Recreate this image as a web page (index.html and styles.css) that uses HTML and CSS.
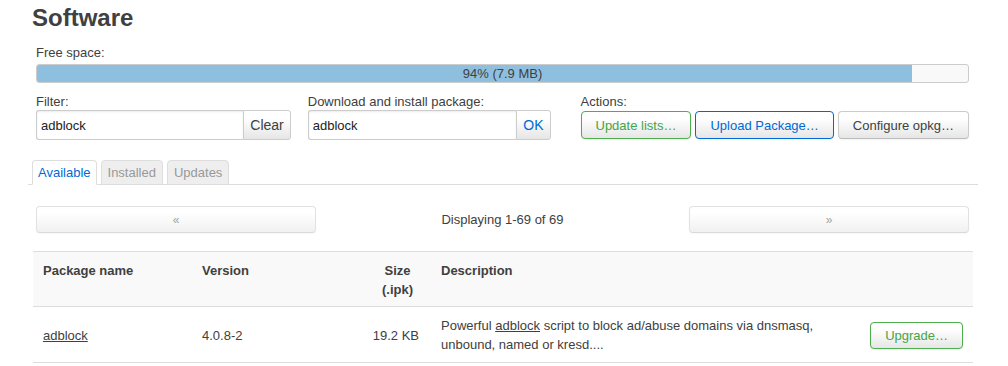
FILE: index.html
```html
<!DOCTYPE html>
<html lang="en">
  <head>
    <meta charset="UTF-8" />
    <title>Software</title>
    <link rel="stylesheet" href="styles.css">
  </head>
  <body>
    <div class="main">
      <h2>Software</h2>

      <div class="controls">
        <label class="field-label">Free space:</label>
        <div class="progress">
          <div class="progress-fill" style="width: 94%"></div>
          <span class="progress-text">94% (7.9 MB)</span>
        </div>

        <div class="control-row">
          <!-- Filter -->
          <div class="control-group filter-group">
            <label class="field-label">Filter:</label>
            <div class="input-group">
              <input type="text" value="adblock" />
              <button class="btn-addon">Clear</button>
            </div>
          </div>

          <!-- Download -->
          <div class="control-group download-group">
            <label class="field-label">Download and install package:</label>
            <div class="input-group">
              <input type="text" value="adblock" />
              <button class="btn-addon btn-addon-action">OK</button>
            </div>
          </div>

          <!-- Actions -->
          <div class="control-group actions-group">
            <label class="field-label">Actions:</label>
            <div class="actions">
              <button class="btn btn-positive">Update lists…</button>
              <button class="btn btn-action">Upload Package…</button>
              <button class="btn">Configure opkg…</button>
            </div>
          </div>
        </div>
      </div>

      <ul class="tabs">
        <li class="tab active">Available</li>
        <li class="tab">Installed</li>
        <li class="tab">Updates</li>
      </ul>

      <div class="pager">
        <button class="btn btn-pager">«</button>
        <div class="pager-info">Displaying 1-69 of 69</div>
        <button class="btn btn-pager">»</button>
      </div>

      <table class="pkg-table">
        <thead>
          <tr>
            <th class="col-name">Package name</th>
            <th class="col-version">Version</th>
            <th class="col-size">Size (.ipk)</th>
            <th class="col-desc">Description</th>
            <th class="col-action"></th>
          </tr>
        </thead>
        <tbody>
          <tr>
            <td><a href="#">adblock</a></td>
            <td>4.0.8-2</td>
            <td class="size">19.2 KB</td>
            <td>Powerful <a href="#">adblock</a> script to block ad/abuse domains via dnsmasq, unbound, named or kresd....</td>
            <td class="action"><button class="btn btn-positive">Upgrade…</button></td>
          </tr>
        </tbody>
      </table>
    </div>
  </body>
</html>
```

FILE: styles.css
```css
body {
  font-family: "Liberation Sans", Arial, sans-serif;
  font-size: 13px;
  line-height: 18px;
  color: #404040;
  background-color: #fff;
  margin: 0;
}

.main {
  margin-left: 28px;
  width: 950px;
}

h2 {
  font-size: 24px;
  line-height: 30px;
  font-weight: bold;
  margin: 3px 0 0;
  padding-left: 4px;
}

.controls {
  padding: 0 9px 0 8px;
}

.field-label {
  display: block;
  line-height: 16px;
}

.controls > .field-label {
  margin-top: 12px;
}

/* Free space bar */
.progress {
  position: relative;
  height: 17px;
  margin-top: 3px;
  border: 1px solid #ccc;
  border-radius: 3px;
  background-color: #f9f9f9;
  overflow: hidden;
}

.progress-fill {
  height: 100%;
  background-color: #8fbfdf;
}

.progress-text {
  position: absolute;
  top: 0;
  left: 0;
  right: 0;
  text-align: center;
  line-height: 17px;
  color: #404040;
}

.control-row {
  display: flex;
  margin-top: 11px;
}

.filter-group {
  width: 255px;
  margin-right: 17px;
}

.download-group {
  width: 243px;
  margin-right: 30px;
}

.actions-group {
  flex: 1;
}

.input-group {
  display: flex;
  height: 30px;
}

.input-group input {
  flex: 1;
  min-width: 0;
  box-sizing: border-box;
  height: 30px;
  margin: 0;
  padding: 0 4px;
  border: 1px solid #ccc;
  border-right: none;
  border-radius: 3px 0 0 3px;
  box-shadow: inset 0 1px 2px rgba(0, 0, 0, 0.08);
  font-family: inherit;
  font-size: 13px;
  color: #222;
  outline: none;
}

.btn-addon {
  box-sizing: border-box;
  height: 30px;
  margin: 0;
  padding: 0 6px;
  border: 1px solid #ccc;
  border-radius: 0 3px 3px 0;
  background-image: linear-gradient(#fff, #fff 25%, #e6e6e6);
  font-family: inherit;
  font-size: 14px;
  color: #404040;
}

.btn-addon-action {
  color: #0069d6;
}

.actions {
  display: flex;
  gap: 4px;
  margin-top: 1px;
}

.btn {
  box-sizing: border-box;
  height: 28px;
  margin: 0;
  padding: 0 14px;
  border: 1px solid #ccc;
  border-bottom-color: #bbb;
  border-radius: 4px;
  background-color: #e6e6e6;
  background-image: linear-gradient(#fff, #fff 25%, #e6e6e6);
  box-shadow: 0 1px 2px rgba(0, 0, 0, 0.05);
  font-family: inherit;
  font-size: 13px;
  color: #404040;
  white-space: nowrap;
  cursor: pointer;
}

.btn-positive {
  border-color: #4cae4c;
  color: #46a546;
}

.btn-action {
  border-color: #0069d6;
  color: #0069d6;
}

/* Tabs */
.tabs {
  display: flex;
  list-style: none;
  margin: 20px 0 0;
  padding: 0 0 0 4px;
  border-bottom: 1px solid #ddd;
}

.tab {
  margin: 0 4px -1px 0;
  padding: 3px 6px 2px;
  border: 1px solid #ddd;
  border-radius: 4px 4px 0 0;
  background-color: #eee;
  color: #999;
}

.tab.active {
  padding: 3px 5px 2px;
  background-color: #fff;
  border-bottom-color: #fff;
  color: #0069d6;
}

/* Pager */
.pager {
  display: grid;
  grid-template-columns: 280px 1fr 280px;
  align-items: center;
  margin: 21px 9px 0 8px;
}

.btn-pager {
  height: 27px;
  opacity: 0.55;
  font-size: 12px;
  color: #555;
}

.pager-info {
  text-align: center;
}

/* Table */
.pkg-table {
  width: 940px;
  margin: 18px 5px 0;
  border-collapse: collapse;
  table-layout: fixed;
}

.pkg-table th,
.pkg-table td {
  box-sizing: border-box;
  padding: 9px 10px 8px;
  line-height: 19px;
  text-align: left;
  border-top: 1px solid #ddd;
  border-bottom: 1px solid #ddd;
}

.pkg-table th {
  vertical-align: top;
  background-color: #f9f9f9;
  font-weight: bold;
  padding-bottom: 7px;
}

.pkg-table td {
  vertical-align: middle;
}

.pkg-table a {
  color: #404040;
  text-decoration: underline;
}

.col-name {
  width: 159px;
}

.col-version {
  width: 170px;
}

.pkg-table th.col-size {
  width: 69px;
  padding-left: 14px;
  padding-right: 12px;
  text-align: center;
}

.col-desc {
  width: 429px;
}

.pkg-table td.size {
  text-align: right;
  padding-right: 12px;
  white-space: nowrap;
}

.pkg-table td.action {
  text-align: right;
}

.pkg-table td.action .btn {
  height: 27px;
}
```
